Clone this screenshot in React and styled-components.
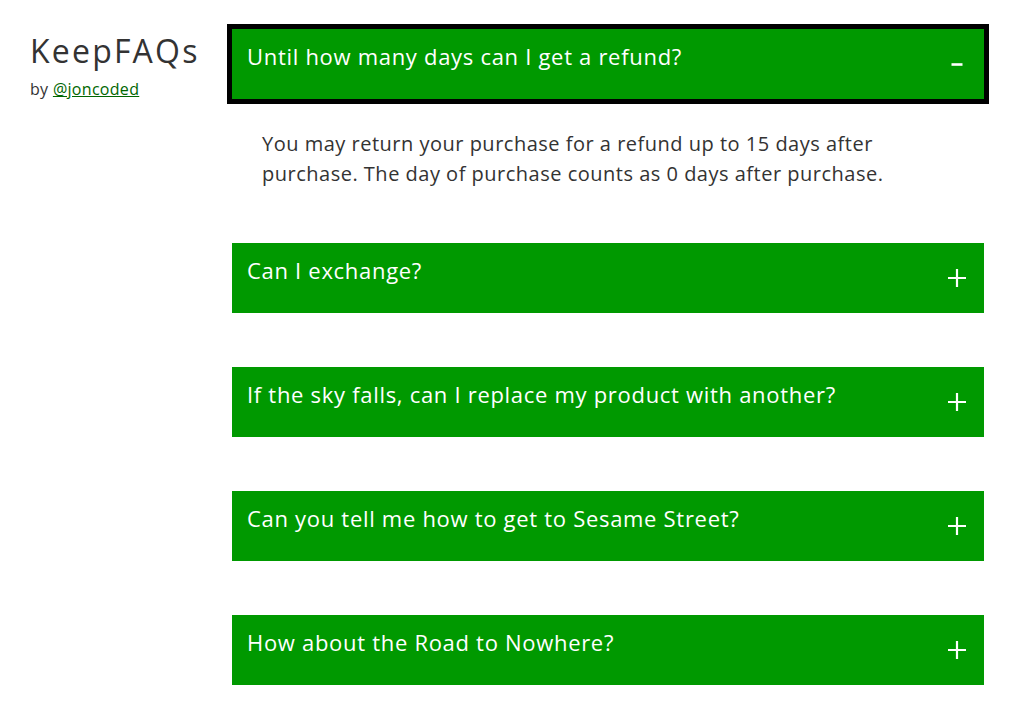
import React, { useState } from "react";
import styled, { createGlobalStyle } from "styled-components";

const GlobalStyle = createGlobalStyle`
  body {
    margin: 0;
    background: #fff;
    font-family: "Open Sans", "Noto Sans", sans-serif;
    color: #333;
  }
`;

const faqs = [
  {
    q: "Until how many days can I get a refund?",
    a: "You may return your purchase for a refund up to 15 days after purchase. The day of purchase counts as 0 days after purchase.",
  },
  { q: "Can I exchange?", a: "Yes, within 15 days of purchase." },
  {
    q: "If the sky falls, can I replace my product with another?",
    a: "Only if the sky falls.",
  },
  { q: "Can you tell me how to get to Sesame Street?", a: "Sunny days." },
  { q: "How about the Road to Nowhere?", a: "Come on inside." },
];

const PlusIcon = () => (
  <svg width="20" height="20" viewBox="0 0 20 20">
    <path d="M10 1v18M1 10h18" stroke="#fff" strokeWidth="2.2" fill="none" />
  </svg>
);

const MinusIcon = () => (
  <svg width="20" height="20" viewBox="0 0 20 20">
    <path d="M4.5 10.5h11" stroke="#fff" strokeWidth="2.6" fill="none" />
  </svg>
);

const App = () => {
  const [open, setOpen] = useState(0);

  return (
    <>
      <GlobalStyle />
      <Page>
        <Side>
          <Title>KeepFAQs</Title>
          <Byline>
            by <a href="#">@joncoded</a>
          </Byline>
        </Side>
        <List>
          {faqs.map((item, i) => (
            <Item key={i}>
              <Question
                $active={open === i}
                onClick={() => setOpen(open === i ? -1 : i)}
              >
                <span>{item.q}</span>
                <Toggle>{open === i ? <MinusIcon /> : <PlusIcon />}</Toggle>
              </Question>
              {open === i && <Answer>{item.a}</Answer>}
            </Item>
          ))}
        </List>
      </Page>
    </>
  );
};

export default App;

const Page = styled.div`
  display: grid;
  grid-template-columns: 202px 752px;
  padding: 29px 30px;
`;

const Side = styled.div`
  display: flex;
  flex-direction: column;
`;

const Title = styled.h1`
  margin: 2px 0 0;
  font-size: 32px;
  font-weight: 400;
  letter-spacing: 2.2px;
  line-height: 40px;
  color: #333;
`;

const Byline = styled.p`
  margin: 8px 0 0;
  font-size: 16px;
  line-height: 20px;
  letter-spacing: 0.3px;
  color: #333;
  a {
    color: #006600;
    text-decoration: underline;
  }
`;

const List = styled.div`
  display: flex;
  flex-direction: column;
  gap: 54px;
`;

const Item = styled.div``;

const Question = styled.button`
  display: flex;
  justify-content: space-between;
  align-items: flex-start;
  width: 100%;
  height: 70px;
  padding: 12px 17px 0 15px;
  box-sizing: border-box;
  border: none;
  background: #009900;
  color: #fff;
  font-family: "Open Sans", "Noto Sans", sans-serif;
  font-size: 22px;
  line-height: 30px;
  letter-spacing: 0.7px;
  text-align: left;
  cursor: pointer;
  outline: ${(p) => (p.$active ? "5px solid #000" : "none")};
`;

const Toggle = styled.span`
  display: flex;
  align-self: center;
  margin-top: -12px;
`;

const Answer = styled.p`
  margin: 30px 0 0;
  padding: 0 80px 0 30px;
  font-size: 20px;
  line-height: 30px;
  letter-spacing: 0.5px;
  color: #333;
`;
